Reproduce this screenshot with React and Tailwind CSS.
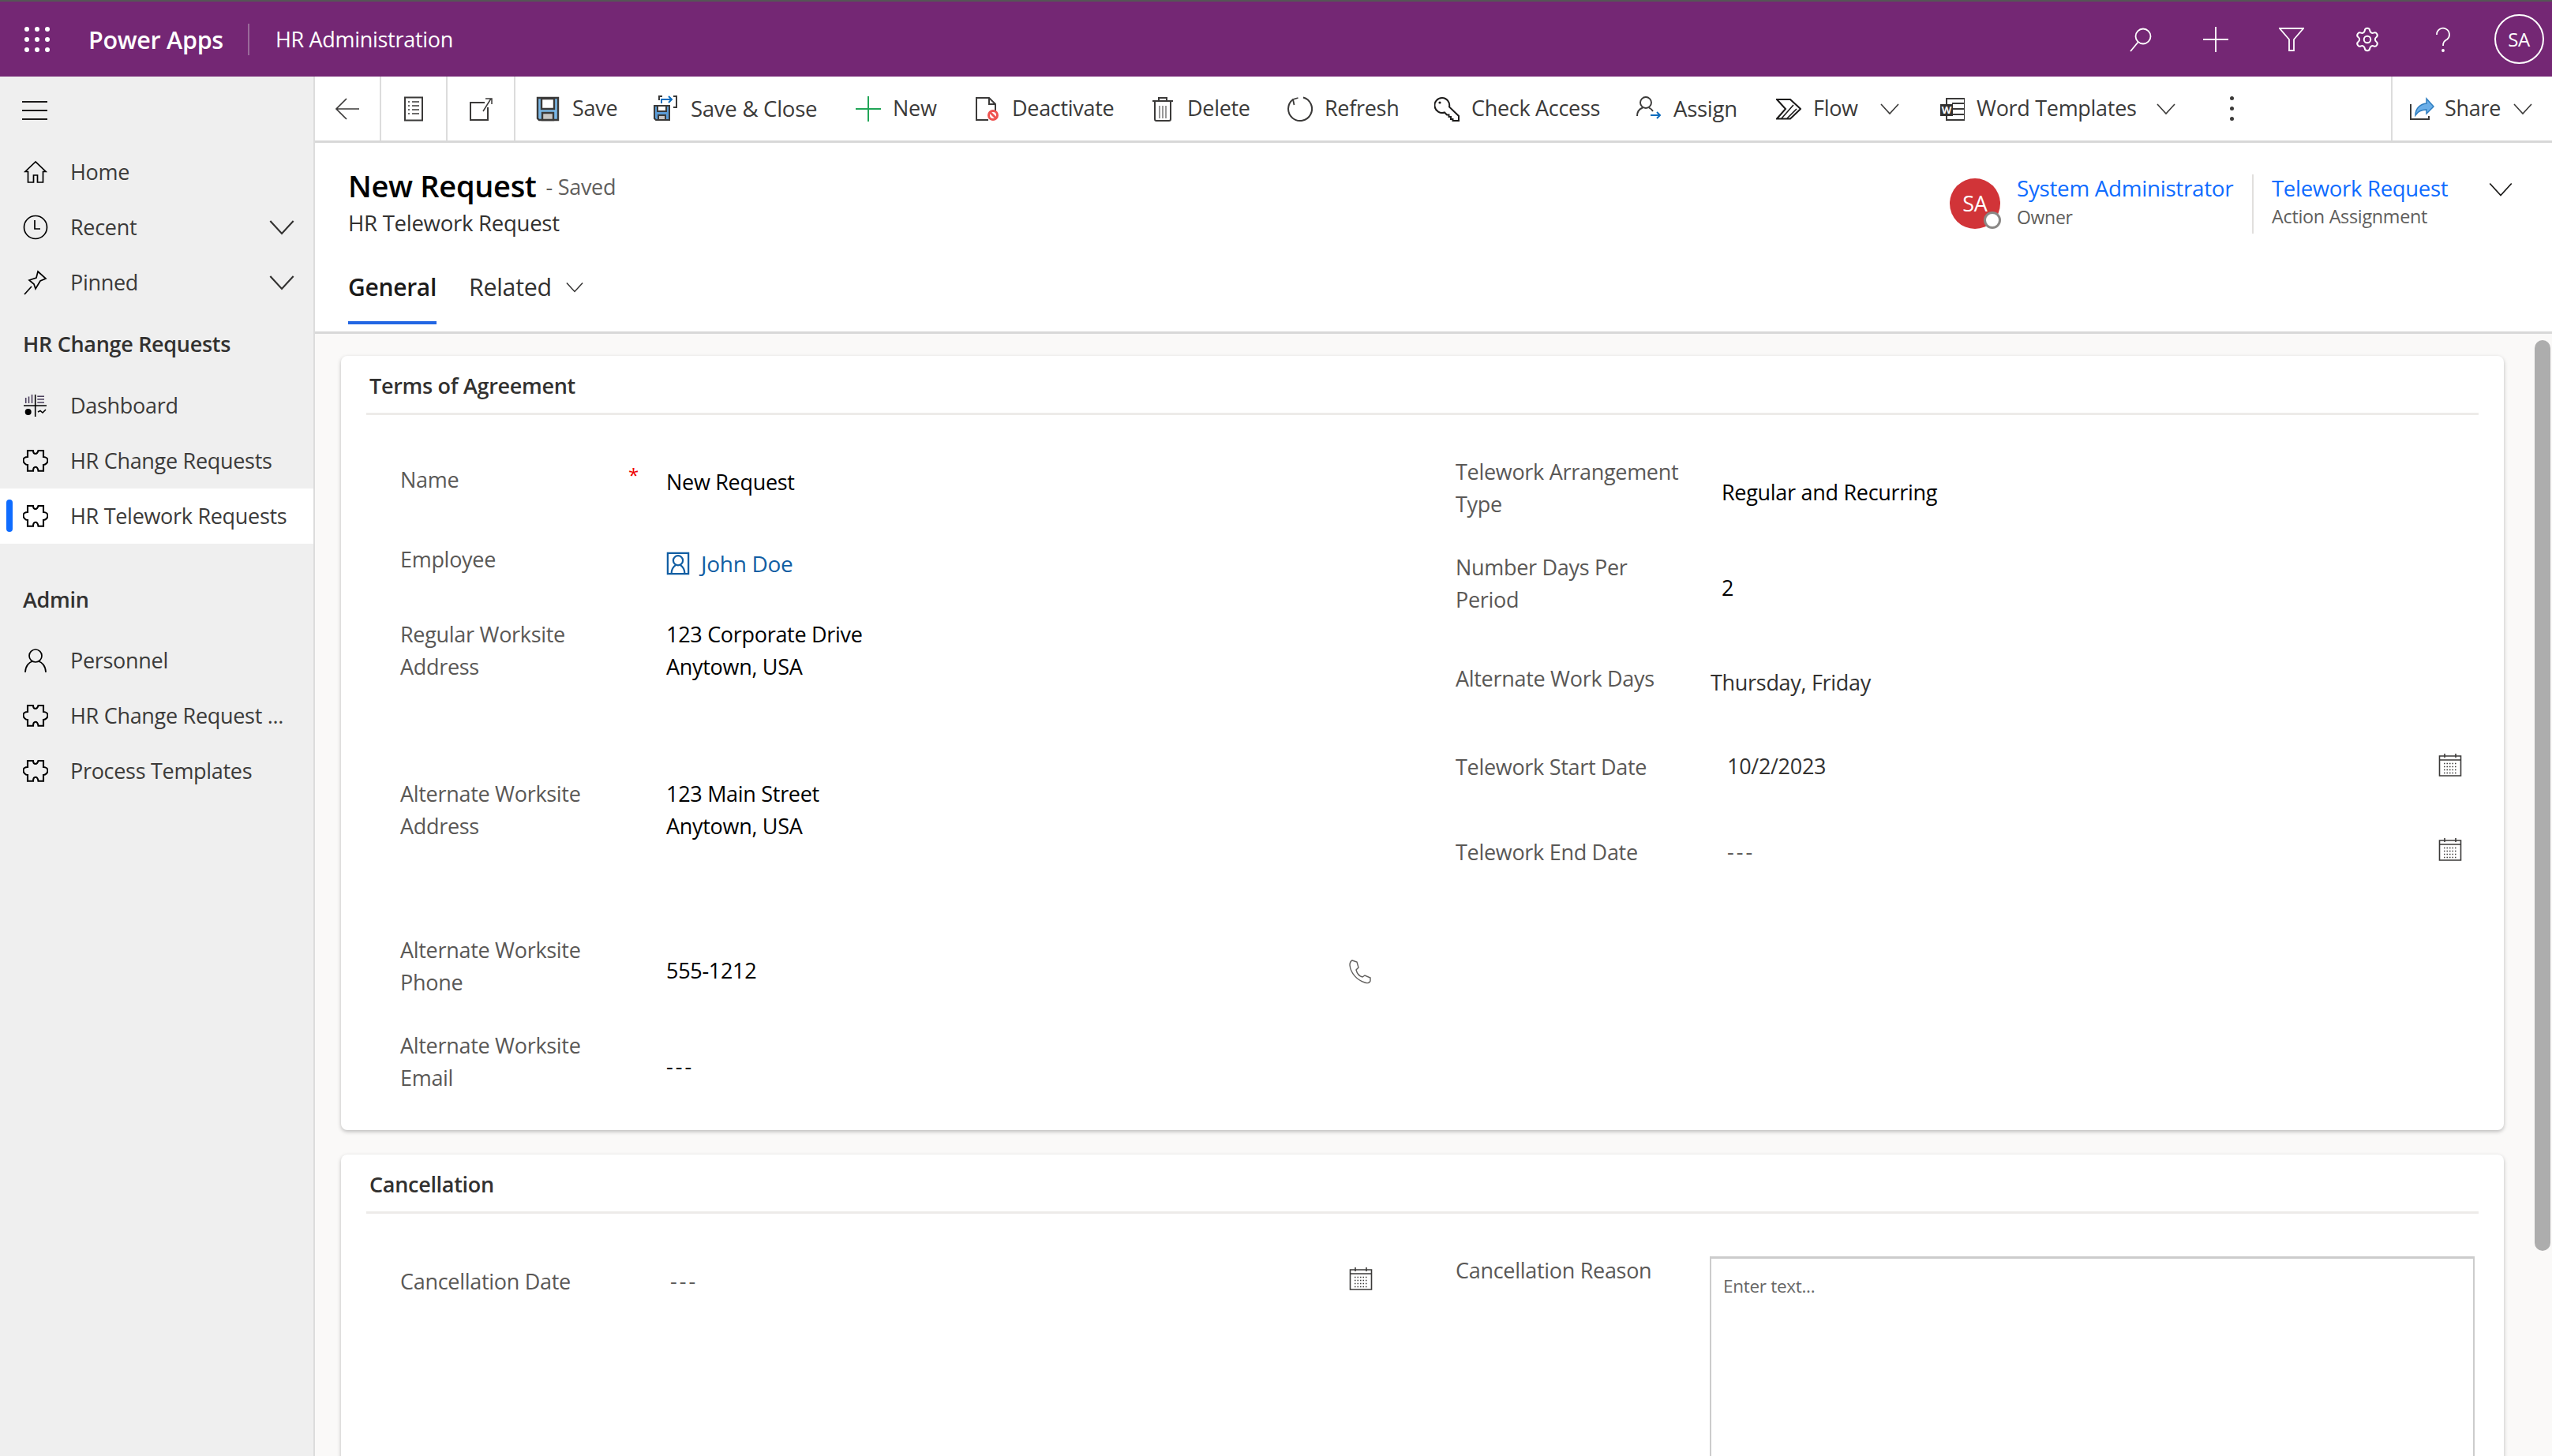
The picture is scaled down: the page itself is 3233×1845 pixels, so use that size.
import { Settings } from 'lucide-react'

const Svg = ({ children, className = 'w-8 h-8', sw = 1.7 }) => (
  <svg viewBox="0 0 32 32" fill="none" stroke="currentColor" strokeWidth={sw} className={className + ' shrink-0'}>
    {children}
  </svg>
)

const Chevron = ({ className = 'w-[24px] h-[24px]', sw = 1.6 }) => (
  <svg viewBox="0 0 24 24" fill="none" stroke="currentColor" strokeWidth={sw} className={className + ' shrink-0'}>
    <path d="M1 6l11 12L23 6" />
  </svg>
)

const Waffle = () => (
  <svg viewBox="0 0 32 32" fill="#fff" className="w-8 h-8">
    {[3, 16, 29].map((y) => [3, 16, 29].map((x) => <circle key={x + '-' + y} cx={x} cy={y} r="3" />))}
  </svg>
)

const Puzzle = () => (
  <Svg sw={2.1}>
    <path d="M6 3h7c0 2 1 4 3 4s3-2 3.500-4H26v8c3 0 5.500 2 5.500 4.500S29 21 26 21v7.700h-6.500c-.5-3-1.500-5-3.500-5s-3 2-3 5H6V21c-3 0-5.500-3-5.500-5.700S3 11 6 11z" />
  </Svg>
)

const Home = () => (
  <Svg>
    <path d="M16 3L3 15.500h3.500V29h7v-9h5v9h7V15.500H29z" />
  </Svg>
)

const Clock = () => (
  <Svg>
    <circle cx="16" cy="16" r="14.500" />
    <path d="M15 7v11h7" />
  </Svg>
)

const Pin = () => (
  <Svg>
    <path d="M19 2l10 9-7 3-6 10-2-6-6-5 9-3z" />
    <path d="M11 21L2 31" />
  </Svg>
)

const Dash = () => (
  <Svg sw={1.600}>
    <path d="M15.700 2v28M1 16h29" />
    <path d="M3.700 6v7M7.500 4.600V13M11.500 2v11M18.300 4.300H27M18.300 8H27M18.300 12H27" stroke="#4a3f5c" />
    <circle cx="6.700" cy="24" r="4" fill="currentColor" stroke="none" />
    <path d="M19 24l3-1.500 3 2.500 4-4" />
  </Svg>
)

const Person = () => (
  <Svg>
    <circle cx="16" cy="10" r="8" />
    <path d="M3 31c0-8 5-13 9-14M29 31c0-8-5-13-9-14" />
  </Svg>
)

const Calendar = () => (
  <Svg sw={1.600}>
    <path d="M2.500 5h27v25h-27zM2.500 10h27" />
    <path d="M9 2v5M23 2v5" />
    <path d="M8 14.500h17M8 18.500h17M8 22.500h17M8 26.500h17" strokeDasharray="1.500 2" />
  </Svg>
)

const Phone = () => (
  <Svg sw={1.400}>
    <path d="M6 2l6 2 2 7-3 3c1 4 4 8 8 9l3-2 7 3v4c-1 3-4 3-7 2C12 27 4 18 3 8c0-3 1-5 3-6z" />
  </Svg>
)

const iconBack = (
  <Svg>
    <path d="M31 16H3M15 3L2 16l13 13" />
  </Svg>
)
const iconForm = (
  <Svg sw={2}>
    <path d="M5 1.500h22v29H5z" />
    <path d="M9 7h2M14 7h9M9 12h2M14 12h9M9 17h2M14 17h9M9 22h2M14 22h9" strokeWidth="1.500" />
  </Svg>
)
const iconPop = (
  <Svg sw={2}>
    <path d="M21 8H3v22h22V14" />
    <path d="M19 19L29 3M22 3h8v7" strokeWidth="1.500" />
  </Svg>
)
const iconSave = (
  <Svg sw={2.400}>
    <path d="M3 2h26v28H5l-2-2z" fill="#7ab8e8" stroke="#3b3a39" />
    <path d="M8 3h16v13H8z" fill="#fff" stroke="#3b3a39" />
    <path d="M9 21h14v9H9z" fill="#c8c6c4" stroke="#3b3a39" />
  </Svg>
)
const iconSaveClose = (
  <Svg sw={2}>
    <path d="M1 13h19v18H3l-2-2z" fill="#5b9bd5" stroke="#3b3a39" />
    <path d="M5 13h11v7H5z" fill="#fff" stroke="#3b3a39" />
    <path d="M6 25h9v6H6z" fill="#c8c6c4" stroke="#3b3a39" />
    <path d="M11 1H7v5M25 1h4v14h-4" stroke="#3b3a39" />
    <path d="M10 10V5h13M19 1l4 4-4 4" stroke="#0f6cbd" />
  </Svg>
)
const iconNew = (
  <Svg sw={2}>
    <path d="M16 0v32M0 16h32" stroke="#21a557" />
  </Svg>
)
const iconDeactivate = (
  <Svg sw={2}>
    <path d="M17 30H2V2h16l8 8v8M18 2v8h8" stroke="#3b3a39" />
    <circle cx="23" cy="24" r="5.500" stroke="#ef5350" strokeWidth="3" fill="#fff" />
    <path d="M19.500 20.500l7 7" stroke="#ef5350" strokeWidth="3" />
  </Svg>
)
const iconDelete = (
  <Svg sw={2}>
    <path d="M3 6h26M11 6V2h10v4M6 6v23a2 2 0 0 0 2 2h16a2 2 0 0 0 2-2V6" />
    <path d="M12 12v16M16 12v16M20 12v16" strokeWidth="1.500" stroke="#777" />
  </Svg>
)
const iconRefresh = (
  <Svg sw={2}>
    <path d="M20 1.500A15 15 0 1 1 7 4" />
    <path d="M13.500 2L7 4l1.500 7" strokeWidth="1.800" />
  </Svg>
)
const iconKey = (
  <Svg sw={2}>
    <path d="M10 2a9.500 9.500 0 1 0 3 18.500l3 3h2.500V26H21v3h2.500v2H31v-6L19 13.500A9.500 9.500 0 0 0 10 2z" stroke="#1b1a19" />
    <circle cx="7" cy="8" r="1.600" fill="#1b1a19" stroke="none" />
  </Svg>
)
const iconAssign = (
  <Svg>
    <circle cx="12" cy="9" r="7" stroke="#3b3a39" strokeWidth="1.900" />
    <path d="M1 26c0-5 3-9 7-10.500M16 15.500c2 1 4 2.500 5 4.500" stroke="#3b3a39" strokeWidth="1.900" />
    <path d="M18 25h12M26 21l4 4-4 4" stroke="#0f6cbd" strokeWidth="2" />
  </Svg>
)
const iconFlow = (
  <Svg sw={2}>
    <path d="M1 4h17l13 12-13 12.500H1L12 16z" stroke="#1b1a19" />
    <path d="M7 28l15-17M14 28l12-12" stroke="#1b1a19" strokeWidth="1.600" />
  </Svg>
)
const iconWord = (
  <Svg sw={2}>
    <path d="M9 3h23v27H9zM16 9h16M16 16h16M16 23h16" stroke="#3b3a39" />
    <path d="M1 10h16v15H1z" fill="#323130" stroke="none" />
    <text x="9" y="22" textAnchor="middle" fontSize="13" fontWeight="700" fill="#fff" stroke="none">W</text>
  </Svg>
)
const iconShare = (
  <Svg sw={2}>
    <path d="M2 10v19h23v-4" stroke="#3b3a39" />
    <path d="M22 3l9 10-9 9v-5c-6 0-11 2-14 7 0-9 6-14 14-15z" fill="#6aaee8" stroke="#2f7ec0" strokeWidth="1.500" />
  </Svg>
)

const commands = [
  { label: 'Save', icon: iconSave, width: 'w-[150px]' },
  { label: 'Save & Close', icon: iconSaveClose, width: 'w-[256px]', text: 'text-[27.600px]' },
  { label: 'New', icon: iconNew, width: 'w-[151px]' },
  { label: 'Deactivate', icon: iconDeactivate, width: 'w-[222px]' },
  { label: 'Delete', icon: iconDelete, width: 'w-[174px]' },
  { label: 'Refresh', icon: iconRefresh, width: 'w-[186px]' },
  { label: 'Check Access', icon: iconKey, width: 'w-[256px]' },
  { label: 'Assign', icon: iconAssign, width: 'w-[177px]', text: 'text-[27.600px]' },
  { label: 'Flow', icon: iconFlow, width: 'w-[207px]', chevron: 'ml-[13px]' },
  { label: 'Word Templates', icon: iconWord, width: 'w-[358px]', chevron: 'ml-[10px]' },
]

const NavItem = ({ icon, label, chevron, active }) => (
  <div className={`relative flex items-center h-[70px] pl-[29px] ${active ? 'bg-white' : ''}`}>
    {active && <span className="absolute left-[8px] top-[14px] w-[8px] h-[41px] rounded-full bg-[#0f6cff]" />}
    {icon}
    <span className="ml-[28px] text-[#3b3a39] whitespace-nowrap">{label}</span>
    {chevron && <Chevron className="w-[32px] h-[32px] ml-auto mr-[24px] text-[#323130]" />}
  </div>
)

const Sidebar = () => (
  <aside className="w-[399px] shrink-0 bg-[#efefef] border-r-[2px] border-[#dcdcdc]">
    <div className="h-[86px] flex items-center pl-[28px]">
      <div className="w-[32px] flex flex-col gap-[9px]">
        <span className="h-[2px] bg-[#1b1a19]" />
        <span className="h-[2px] bg-[#1b1a19]" />
        <span className="h-[2px] bg-[#1b1a19]" />
      </div>
    </div>
    <NavItem icon={<Home />} label="Home" />
    <NavItem icon={<Clock />} label="Recent" chevron />
    <NavItem icon={<Pin />} label="Pinned" chevron />
    <div className="h-[86px] flex items-center pl-[29px] font-semibold text-[#323130]">HR Change Requests</div>
    <NavItem icon={<Dash />} label="Dashboard" />
    <NavItem icon={<Puzzle />} label="HR Change Requests" />
    <NavItem icon={<Puzzle />} label="HR Telework Requests" active />
    <div className="h-[113px] pt-[30px] flex items-center pl-[29px] font-semibold text-[#323130]">Admin</div>
    <NavItem icon={<Person />} label="Personnel" />
    <NavItem icon={<Puzzle />} label="HR Change Request ..." />
    <NavItem icon={<Puzzle />} label="Process Templates" />
  </aside>
)

const CommandBar = () => (
  <div className="h-[84px] shrink-0 flex items-stretch border-b-[3px] border-[#d8d8d8] bg-white text-[#3b3a39]">
    <div className="w-[84px] flex items-center justify-center border-r-[2px] border-[#dcdcdc]">{iconBack}</div>
    <div className="w-[84px] flex items-center justify-center border-r-[2px] border-[#dcdcdc]">{iconForm}</div>
    <div className="w-[86px] flex items-center justify-center border-r-[2px] border-[#dcdcdc]">{iconPop}</div>
    <div className="flex items-center pl-[25px]">
      {commands.map((c) => (
        <div key={c.label} className={`flex items-center gap-[15px] ${c.width}`}>
          {c.icon}
          <span className={`whitespace-nowrap ${c.text || ''}`}>{c.label}</span>
          {c.chevron && <Chevron className={`w-[24px] h-[24px] ${c.chevron}`} />}
        </div>
      ))}
      <div className="flex flex-col items-center gap-[8px] w-[24px]">
        <span className="w-[5px] h-[5px] rounded-full bg-[#3b3a39]" />
        <span className="w-[5px] h-[5px] rounded-full bg-[#3b3a39]" />
        <span className="w-[5px] h-[5px] rounded-full bg-[#3b3a39]" />
      </div>
    </div>
    <div className="ml-auto w-[204px] flex items-center gap-[13px] pl-[21px] border-l-[2px] border-[#dcdcdc]">
      {iconShare}
      <span>Share</span>
      <Chevron className="w-[24px] h-[24px] ml-[3px]" />
    </div>
  </div>
)

const FormHeader = () => (
  <div className="h-[242px] shrink-0 border-b-[3px] border-[#d8d8d8] bg-white pl-[42px] pr-[50px]">
    <div className="flex justify-between pt-[29px]">
      <div>
        <div className="h-[50px] flex items-center">
          <span className="text-[38px] font-semibold text-[#000] whitespace-nowrap">New Request</span>
          <span className="ml-[12px] mt-[4px] text-[#605e5c]">- Saved</span>
        </div>
        <div className="mt-[3px] h-[40px] flex items-center text-[27.600px] text-[#323130]">HR Telework Request</div>
      </div>
      <div className="flex items-start mt-[11px]">
        <div className="relative mt-[5px] w-[64px] h-[64px] rounded-full bg-[#d13438] text-white flex items-center justify-center">
          SA
          <span className="absolute -right-[1px] bottom-0 w-[22px] h-[22px] rounded-full bg-white border-[3px] border-[#8a8886]" />
        </div>
        <div className="ml-[21px] w-[298px] flex flex-col">
          <span className="h-[36px] flex items-center text-[27.800px] text-[#0f6cff] whitespace-nowrap">System Administrator</span>
          <span className="h-[36px] flex items-center text-[23px] text-[#605e5c]">Owner</span>
        </div>
        <div className="h-[75px] w-[300px] border-l-[2px] border-[#e1dfdd] pl-[23px] flex flex-col">
          <span className="h-[36px] flex items-center text-[27.500px] text-[#0f6cff] whitespace-nowrap">Telework Request</span>
          <span className="h-[36px] flex items-center text-[23.400px] text-[#605e5c] whitespace-nowrap">Action Assignment</span>
        </div>
        <Chevron className="w-[30px] h-[30px] mt-[4px] text-[#1b1a19]" sw={1.400} />
      </div>
    </div>
    <div className="mt-[38px] flex items-start">
      <div className="h-[70px] border-b-[4px] border-[#2266e3] font-semibold text-[30px] text-[#1b1a19]">General</div>
      <div className="ml-[41px] h-[46px] flex items-center text-[30.400px] text-[#323130]">
        Related
        <Chevron className="w-[22px] h-[22px] ml-[18px]" />
      </div>
    </div>
  </div>
)

const Field = ({ label, height, children, required, labelWidth = 'w-[337px]', align = 'items-center' }) => (
  <div className={`flex ${align} ${height}`}>
    <div className={`${labelWidth} shrink-0 relative text-[#5a5856] leading-[41px]`}>
      {label}
      {required && <span className="absolute left-[289px] -top-[6px] text-[#e00] text-[24px]">*</span>}
    </div>
    {children}
  </div>
)

const Value = ({ children, className = 'pt-[11px]' }) => (
  <div className={`text-[#000] font-medium leading-[41px] ${className}`}>{children}</div>
)

const Card = ({ title, children, className = '' }) => (
  <section className={`bg-white rounded-[8px] shadow-[0_2px_5px_rgba(0,0,0,0.25)] ${className}`}>
    <div className="mx-[32px] h-[75px] flex items-center pl-[4px] pt-[4px] border-b-[3px] border-[#edebe9] font-semibold text-[#323130]">
      {title}
    </div>
    {children}
  </section>
)

const LeftColumn = () => (
  <div className="w-[1412px] shrink-0 pl-[75px] pr-[103px] pt-[31px]">
    <Field label="Name" required height="h-[100px]">
      <Value className="pt-[6px]">New Request</Value>
    </Field>
    <Field label="Employee" height="h-[102px]">
      <div className="flex items-center gap-[14px] pt-[11px] text-[#115ea3] text-[28px] font-medium">
        <svg viewBox="0 0 32 32" fill="none" stroke="currentColor" strokeWidth="2.400" className="w-[30px] h-[30px]">
          <path d="M2 2h28v28H2z" />
          <circle cx="16" cy="12" r="6.500" />
          <path d="M7 30c0-7 3-10 6-12M25 30c0-7-3-10-6-12" />
        </svg>
        John Doe
      </div>
    </Field>
    <Field label={<>Regular Worksite<br />Address</>} height="h-[205px] pt-[24px]" align="items-start">
      <div className="text-[#000] font-medium leading-[41px]">123 Corporate Drive<br />Anytown, USA</div>
    </Field>
    <Field label={<>Alternate Worksite<br />Address</>} height="h-[200px] pt-[21px]" align="items-start">
      <div className="text-[#000] font-medium leading-[41px]">123 Main Street<br />Anytown, USA</div>
    </Field>
    <Field label={<>Alternate Worksite<br />Phone</>} height="h-[120px]">
      <Value>555-1212</Value>
      <div className="ml-auto w-[36px] mt-[14px] flex justify-center text-[#605e5c]"><Phone /></div>
    </Field>
    <Field label={<>Alternate Worksite<br />Email</>} height="h-[122px]">
      <Value className="pt-[11px] tracking-[3px]">---</Value>
    </Field>
  </div>
)

const RightColumn = () => (
  <div className="flex-1 pr-[48px] pt-[32px]">
    <Field label={<>Telework Arrangement<br />Type</>} labelWidth="w-[323px]" height="h-[120px]">
      <Value className="pt-[10px] pl-[14px]">Regular and Recurring</Value>
    </Field>
    <Field label={<>Number Days Per<br />Period</>} labelWidth="w-[323px]" height="h-[122px]">
      <Value className="pt-[10px] pl-[14px]">2</Value>
    </Field>
    <Field label="Alternate Work Days" labelWidth="w-[323px]" height="h-[118px]">
      <Value className="pt-[10px] !text-[#323130]">Thursday, Friday</Value>
    </Field>
    <Field label="Telework Start Date" labelWidth="w-[323px]" height="h-[107px]">
      <span className="pl-[21px] text-[#323130]">10/2/2023</span>
      <div className="ml-auto w-[36px] -mt-[6px] text-[#3b3a39]"><Calendar /></div>
    </Field>
    <Field label="Telework End Date" labelWidth="w-[323px]" height="h-[108px]">
      <span className="pl-[21px] text-[#605e5c] tracking-[3px]">---</span>
      <div className="ml-auto w-[36px] -mt-[6px] text-[#3b3a39]"><Calendar /></div>
    </Field>
  </div>
)

export default function App() {
  return (
    <div className="w-[3233px] h-[1845px] overflow-hidden flex flex-col bg-white text-[27px] font-['Open_Sans',sans-serif] tracking-[-0.3px]">
      <header className="h-[97px] shrink-0 border-t-[2px] border-[#555] bg-[#742774] flex items-center text-white">
        <div className="w-[94px] flex justify-center"><Waffle /></div>
        <div className="pl-[18px] pr-[31px] pt-[2px] text-[30.500px] font-semibold whitespace-nowrap">Power Apps</div>
        <div className="border-l-[2px] border-[#9a6a9a] h-[40px] pl-[33px] pt-[2px] flex items-center whitespace-nowrap">HR Administration</div>
        <div className="ml-auto flex items-center text-white">
          <div className="w-[96px] flex justify-center">
            <Svg sw={1.800}><circle cx="20" cy="12" r="9.500" /><path d="M13.500 19.500L4 31" /></Svg>
          </div>
          <div className="w-[96px] flex justify-center">
            <Svg sw={1.800}><path d="M16 0v32M0 16h32" /></Svg>
          </div>
          <div className="w-[96px] flex justify-center">
            <Svg sw={1.800}><path d="M1 2h30L19 16v14h-6V16z" /></Svg>
          </div>
          <div className="w-[96px] flex justify-center">
            <Settings className="w-[34px] h-[34px]" strokeWidth={1.400} />
          </div>
          <div className="w-[96px] flex justify-center">
            <Svg sw={1.800}><path d="M8 10a8 8 0 1 1 13 6c-3 2-5 3-5 8" /><circle cx="16" cy="30" r="1" fill="#fff" /></Svg>
          </div>
          <div className="w-[84px] ml-[6px] flex justify-center">
            <div className="w-[63px] h-[63px] rounded-full border-[2px] border-white flex items-center justify-center text-[24px]">SA</div>
          </div>
        </div>
      </header>
      <div className="flex-1 flex min-h-0">
        <Sidebar />
        <main className="flex-1 min-w-0 flex flex-col">
          <CommandBar />
          <FormHeader />
          <div className="relative flex-1 min-h-0 overflow-hidden bg-[#faf9f8] pl-[33px] pr-[61px] pt-[28px]">
            <Card title="Terms of Agreement" className="h-[981px]">
              <div className="flex">
                <LeftColumn />
                <RightColumn />
              </div>
            </Card>
            <Card title="Cancellation" className="mt-[31px] h-[600px]">
              <div className="flex">
                <div className="w-[1412px] shrink-0 pl-[75px] pr-[100px] pt-[25px]">
                  <Field label="Cancellation Date" height="h-[120px]">
                    <span className="pl-[5px] text-[#605e5c] tracking-[3px]">---</span>
                    <div className="ml-auto w-[36px] -mt-[6px] text-[#3b3a39]"><Calendar /></div>
                  </Field>
                </div>
                <div className="flex-1 pt-[54px] flex items-start">
                  <div className="w-[322px] shrink-0 -mt-[3px] leading-[41px] text-[#5a5856]">Cancellation Reason</div>
                  <div className="w-[969px] h-[500px] border-[2px] border-t-[3px] border-[#ccc] pl-[15px] pt-[18px] text-[22.500px] text-[#666]">Enter text...</div>
                </div>
              </div>
            </Card>
            <div className="absolute right-[2px] top-[8px] w-[20px] h-[1154px] rounded-full bg-[#adadad]" />
          </div>
        </main>
      </div>
    </div>
  )
}
